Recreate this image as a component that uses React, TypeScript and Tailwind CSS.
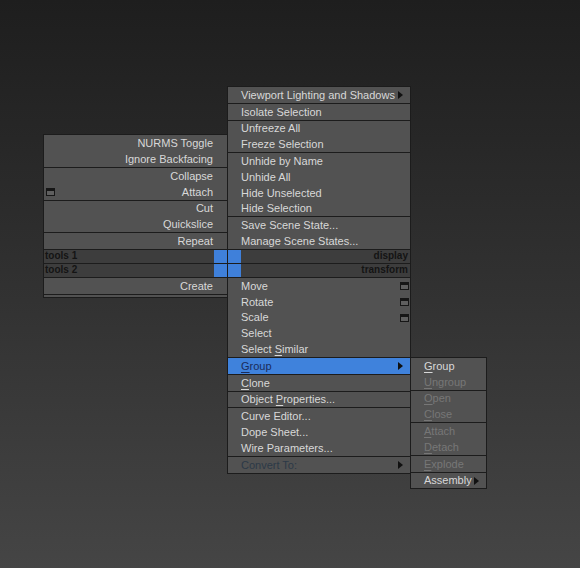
import React from "react";

const ROW = "h-[15.8px] flex items-center whitespace-nowrap pt-px";
const TXT = "text-[#d8d8d8]";
const DIM = "text-[#777777]";

function Arrow() {
  return <span className="block w-0 h-0 border-y-[4px] border-y-transparent border-l-[5px] border-l-[#111111]" />;
}

function OptBox() {
  return <span className="block w-[9px] h-[8px] border border-[#161616] border-t-[3px] bg-[#5f5f5f]" />;
}

function U({ children }: { children: React.ReactNode }) {
  return <span className="underline underline-offset-[2px] decoration-1">{children}</span>;
}

function Grp({ children, className = "" }: { children: React.ReactNode; className?: string }) {
  return <div className={"bg-[#525252] flex flex-col " + className}>{children}</div>;
}

function L({ children, className = "" }: { children: React.ReactNode; className?: string }) {
  return <div className={ROW + " justify-end pr-[14px] " + TXT + " " + className}>{children}</div>;
}

function C({ children, className = "" }: { children: React.ReactNode; className?: string }) {
  return <div className={ROW + " pl-[13px] " + TXT + " " + className}>{children}</div>;
}

function S({ children, dim, className = "" }: { children: React.ReactNode; dim?: boolean; className?: string }) {
  return <div className={ROW + " pl-[13px] " + (dim ? DIM : TXT) + " " + className}>{children}</div>;
}

export default function App() {
  return (
    <div className="relative w-[580px] h-[568px] overflow-hidden bg-linear-to-b from-[#1e1e1e] to-[#454545] font-['Liberation_Sans',Arial,sans-serif] text-[11px] leading-none">
      {/* Quad menu */}
      <div className="absolute left-[43px] top-[86px] grid grid-cols-[184px_184px]">
        {/* top-left: tools 1 */}
        <div className="self-end flex flex-col gap-px bg-[#1c1c1c] pl-px pt-px pb-px">
          <Grp>
            <L>NURMS Toggle</L>
            <L>Ignore Backfacing</L>
          </Grp>
          <Grp>
            <L>Collapse</L>
            <div className={ROW + " justify-between pl-[2px] pr-[14px] " + TXT}>
              <OptBox />
              <span>Attach</span>
            </div>
          </Grp>
          <Grp>
            <L>Cut</L>
            <L>Quickslice</L>
          </Grp>
          <Grp>
            <L>Repeat</L>
          </Grp>
        </div>
        {/* top-right: display */}
        <div className="flex flex-col gap-px bg-[#1c1c1c] px-px pt-px pb-px">
          <Grp>
            <C>
              <span>Viewport Lighting and Shadows</span>
              <span className="ml-auto mr-[7px]"><Arrow /></span>
            </C>
          </Grp>
          <Grp>
            <C>Isolate Selection</C>
          </Grp>
          <Grp>
            <C>Unfreeze All</C>
            <C>Freeze Selection</C>
          </Grp>
          <Grp>
            <C>Unhide by Name</C>
            <C>Unhide All</C>
            <C>Hide Unselected</C>
            <C>Hide Selection</C>
          </Grp>
          <Grp>
            <C>Save Scene State...</C>
            <C>Manage Scene States...</C>
          </Grp>
        </div>

        {/* header rows */}
        <div className="bg-[#1c1c1c] pl-px pb-px">
          <div className="h-[13px] bg-[#3d3d3d] flex items-center">
            <span className="pl-px text-[10px] font-bold text-[#141414]">tools 1</span>
            <span className="ml-auto w-[13px] h-full bg-[#3f80da]" />
          </div>
        </div>
        <div className="bg-[#1c1c1c] px-px pb-px">
          <div className="h-[13px] bg-[#3d3d3d] flex items-center">
            <span className="w-[13px] h-full bg-[#3f80da]" />
            <span className="ml-auto pr-[2px] text-[10px] font-bold text-[#141414]">display</span>
          </div>
        </div>
        <div className="bg-[#1c1c1c] pl-px pb-px">
          <div className="h-[13px] bg-[#3d3d3d] flex items-center">
            <span className="pl-px text-[10px] font-bold text-[#141414]">tools 2</span>
            <span className="ml-auto w-[13px] h-full bg-[#3f80da]" />
          </div>
        </div>
        <div className="bg-[#1c1c1c] px-px pb-px">
          <div className="h-[13px] bg-[#3d3d3d] flex items-center">
            <span className="w-[13px] h-full bg-[#3f80da]" />
            <span className="ml-auto pr-[2px] text-[10px] font-bold text-[#141414]">transform</span>
          </div>
        </div>

        {/* bottom-left: tools 2 */}
        <div className="self-start flex flex-col gap-px bg-[#1c1c1c] pl-px pb-px">
          <Grp>
            <L className="h-[16px]">Create</L>
          </Grp>
          <Grp className="h-[2px]">{null}</Grp>
        </div>
        {/* bottom-right: transform */}
        <div className="flex flex-col gap-px bg-[#1c1c1c] px-px pb-px">
          <Grp>
            <C>
              <span>Move</span>
              <span className="ml-auto mr-[1px]"><OptBox /></span>
            </C>
            <C>
              <span>Rotate</span>
              <span className="ml-auto mr-[1px]"><OptBox /></span>
            </C>
            <C>
              <span>Scale</span>
              <span className="ml-auto mr-[1px]"><OptBox /></span>
            </C>
            <C>Select</C>
            <C>
              <span>
                Select <U>S</U>imilar
              </span>
            </C>
          </Grp>
          <div className="bg-[#3f82dc] flex flex-col">
            <div className={ROW + " pl-[13px] text-[#1b2c5a]"}>
              <U>G</U>
              <span>roup</span>
              <span className="ml-auto mr-[7px]"><Arrow /></span>
            </div>
          </div>
          <Grp>
            <C>
              <U>C</U>
              <span>lone</span>
            </C>
          </Grp>
          <Grp>
            <C>
              <span>
                Object <U>P</U>roperties...
              </span>
            </C>
          </Grp>
          <Grp>
            <C>Curve Editor...</C>
            <C>Dope Sheet...</C>
            <C>Wire Parameters...</C>
          </Grp>
          <Grp>
            <div className={ROW + " pl-[13px] text-[#2c3947]"}>
              <span>Convert To:</span>
              <span className="ml-auto mr-[7px]"><Arrow /></span>
            </div>
          </Grp>
        </div>
      </div>

      {/* Group submenu */}
      <div className="absolute left-[410px] top-[357px] w-[77px] flex flex-col gap-px bg-[#1c1c1c] p-px">
        <Grp>
          <S>
            <U>G</U>roup
          </S>
          <S dim>
            <U>U</U>ngroup
          </S>
        </Grp>
        <Grp>
          <S dim>
            <U>O</U>pen
          </S>
          <S dim>
            <U>C</U>lose
          </S>
        </Grp>
        <Grp>
          <S dim>
            <U>A</U>ttach
          </S>
          <S dim>
            <U>D</U>etach
          </S>
        </Grp>
        <Grp>
          <S dim>
            <U>E</U>xplode
          </S>
        </Grp>
        <Grp>
          <S>
            <span>Assembly</span>
            <span className="ml-[2px]"><Arrow /></span>
          </S>
        </Grp>
      </div>
    </div>
  );
}
